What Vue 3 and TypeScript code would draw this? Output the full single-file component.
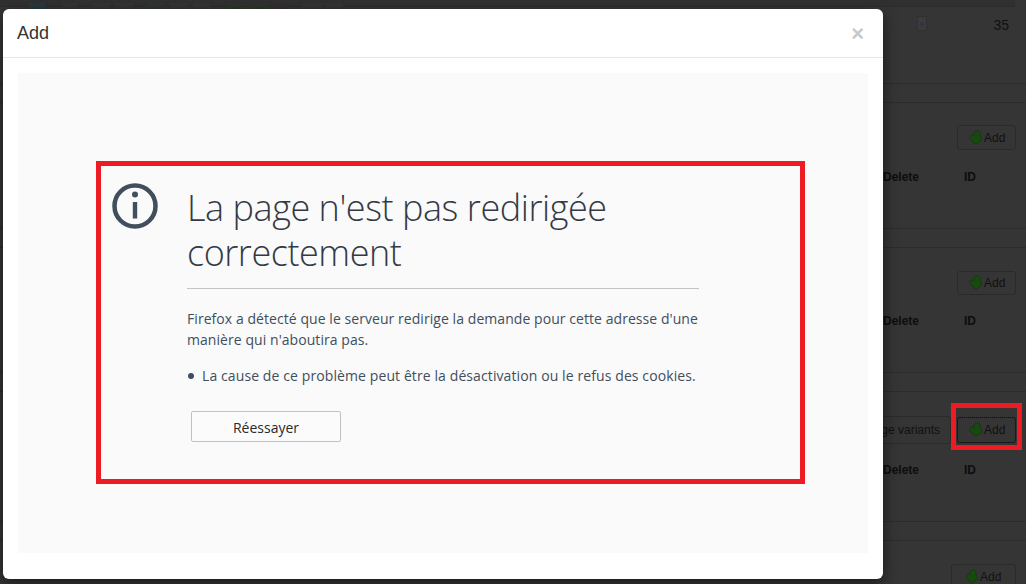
<script setup lang="ts">
interface Row {
  id: string
  head: boolean
  variants?: boolean
  focus?: boolean
}
interface Thumb {
  gap: number
  width: number
  tint: string
}
const thumbs: Thumb[] = [
  { gap: 29, width: 16, tint: '#29383f' },
  { gap: 18, width: 14, tint: '#323435' },
  { gap: 15, width: 18, tint: '#323435' },
  { gap: 5, width: 18, tint: '#323435' },
  { gap: 14, width: 16, tint: '#303530' },
  { gap: 7, width: 18, tint: '#323435' },
  { gap: 5, width: 17, tint: '#323435' },
  { gap: 18, width: 14, tint: '#2d362a' },
  { gap: 8, width: 17, tint: '#2d362a' },
  { gap: 8, width: 13, tint: '#352f2f' },
  { gap: 14, width: 21, tint: '#323435' },
  { gap: 2, width: 18, tint: '#323435' },
]
const rows: Row[] = [
  { id: 'b1', head: true },
  { id: 'b2', head: true },
  { id: 'b3', head: true, variants: true, focus: true },
  { id: 'b4', head: false },
]
</script>

<template>
  <div class="page">
    <div class="backdrop">
      <div class="strip">
        <span
          v-for="(t, i) in thumbs"
          :key="i"
          class="thumb"
          :style="{ marginLeft: t.gap + 'px', width: t.width + 'px', background: t.tint }"
        ></span>
      </div>
      <div class="first-row">
        <span class="file"><i></i></span>
        <span class="num">35</span>
      </div>
      <section v-for="r in rows" :key="r.id" class="block" :class="r.id">
        <div class="actions">
          <span v-if="r.variants" class="btn variants">Manage variants</span>
          <span class="btn add" :class="{ focus: r.focus, wide: !r.head }">
            <svg class="clover" viewBox="0 0 16 16" aria-hidden="true">
              <path d="M6.200 5.600a3.200 3.200 0 1 1 5.400.4 3.100 3.100 0 0 1 .6 5.600 3.100 3.100 0 0 1-1.300.1 3.200 3.200 0 0 1-6.200-.9 3.100 3.100 0 0 1-.6-.1A3.100 3.100 0 0 1 3.400 5.300a3.100 3.100 0 0 1 2.800.3z" />
            </svg>Add
          </span>
        </div>
        <div v-if="r.head" class="heads"><b>Delete</b><b>ID</b></div>
      </section>
      <span class="mark"></span>
    </div>

    <div class="modal">
      <header class="modal-head">
        <h4>Add</h4>
        <span class="close">×</span>
      </header>
      <div class="modal-body">
        <div class="frame">
          <div class="error">
            <svg class="info" viewBox="0 0 46 46" aria-hidden="true">
              <circle cx="23" cy="23" r="20.500" fill="none" stroke="#414e5d" stroke-width="4.500" />
              <circle cx="23" cy="11.500" r="3" fill="#414e5d" />
              <rect x="20.800" y="19" width="4.400" height="16.500" fill="#414e5d" />
            </svg>
            <div class="content">
              <h1>La page n'est pas redirigée correctement</h1>
              <p>Firefox a détecté que le serveur redirige la demande pour cette adresse d'une manière qui n'aboutira pas.</p>
              <ul><li>La cause de ce problème peut être la désactivation ou le refus des cookies.</li></ul>
              <button type="button">Réessayer</button>
            </div>
          </div>
        </div>
      </div>
    </div>
  </div>
</template>

<style>
html, body { margin: 0; overflow: hidden; }
</style>

<style scoped>
.page {
  position: relative;
  width: 1026px;
  height: 584px;
  overflow: hidden;
  background: #353535;
  font-family: "Liberation Sans", Arial, sans-serif;
}
.backdrop { width: 1026px; height: 584px; color: #111; }
.strip {
  display: flex;
  box-sizing: border-box;
  height: 7px;
  width: 1015px;
  padding-top: 3px;
  background: #303030;
  border-bottom: 1px solid #2c2c2c;
}
.thumb { height: 6px; flex: none; }
.first-row {
  display: flex;
  justify-content: space-between;
  box-sizing: border-box;
  height: 76px;
  margin-left: 917px;
  padding: 9px 17px 0 0;
  font-size: 14px;
  line-height: 18px;
}
.file {
  box-sizing: border-box;
  width: 10px;
  height: 15px;
  background: #3b3b3b;
  border: 1px solid #303030;
  display: flex;
  align-items: center;
  justify-content: center;
}
.file i { width: 4px; height: 4px; border-radius: 50%; background: #2b3550; }
.block { border-top: 1px solid #2c2c2c; box-sizing: border-box; }
.block::before {
  content: "";
  display: block;
  height: 18px;
  border-bottom: 1px solid #2c2c2c;
}
.b1 { height: 145px; }
.b2 { height: 144px; }
.b3 { height: 149px; }
.b4 { height: 63px; }
.actions { display: flex; justify-content: flex-end; gap: 6px; padding: 22px 10px 0 0; }
.b2 .actions { padding-top: 23px; }
.b3 .actions { padding-top: 24px; align-items: center; }
.b4 .actions { padding-top: 23px; }
.btn {
  display: inline-flex;
  align-items: center;
  box-sizing: border-box;
  height: 25px;
  font-size: 12px;
  color: #111;
  border: 1px solid #2a2a2a;
  border-radius: 3px;
}
.b2 .btn { height: 24px; }
.add { width: 59px; padding-left: 10px; }
.add.wide { width: 65px; padding-left: 12px; }
.add.focus { height: 26px; outline: 1px dotted #0d0d0d; outline-offset: -1px; }
.variants { height: 28px; padding: 0 10px; white-space: nowrap; }
.clover { width: 16px; height: 16px; fill: #174a0e; stroke: #10320a; stroke-width: 0.6; flex: none; }
.heads { display: flex; padding-left: 883px; font-size: 12px; color: #0d0d0d; margin-top: 20px; }
.b2 .heads { margin-top: 19px; }
.b3 .heads { margin-top: 19px; }
.heads b:first-child { width: 81px; }
.mark {
  position: absolute;
  left: 951px;
  top: 403px;
  width: 71px;
  height: 47px;
  box-sizing: border-box;
  border: 5px solid #ed1c24;
}
.modal {
  position: absolute;
  left: 3px;
  top: 9px;
  width: 880px;
  height: 570px;
  background: #fff;
  border-radius: 6px;
  box-shadow: 0 5px 15px rgba(0, 0, 0, 0.5);
  display: flex;
  flex-direction: column;
}
.modal-head {
  display: flex;
  justify-content: space-between;
  align-items: center;
  box-sizing: border-box;
  height: 49px;
  padding: 0 19px 0 14px;
  border-bottom: 1px solid #e5e5e5;
}
h4 { margin: 0; font-size: 18px; font-weight: 400; color: #333; line-height: 1; }
.close { font-size: 22px; font-weight: 700; color: #c9c9c9; line-height: 1; padding-top: 1px; }
.modal-body { padding: 15px; flex: 1; display: flex; }
.frame {
  box-sizing: border-box;
  width: 850px;
  height: 480px;
  padding: 88px 0 0 78px;
  background: #fafafa;
}
.error {
  box-sizing: border-box;
  width: 709px;
  height: 323px;
  border: 5px solid #ed1c24;
  display: flex;
  padding: 18px 0 0 11px;
  color: #414e5d;
  font-family: "Open Sans", "Noto Sans", sans-serif;
}
.info { width: 46px; height: 46px; flex: none; margin: -1px 29px 0 0; }
.content { width: 512px; }
h1 {
  margin: 0;
  padding: 1px 0 13px;
  font-size: 36px;
  line-height: 45px;
  font-weight: 300;
  color: #333a44;
  border-bottom: 1px solid #c3c3c3;
  letter-spacing: -0.45px;
}
p { margin: 19px 0 0; font-size: 14px; line-height: 21px; letter-spacing: 0.06px; }
ul { margin: 15px 0 0; padding: 0; list-style: none; font-size: 14px; line-height: 21px; letter-spacing: 0.1px; }
li { display: flex; white-space: nowrap; }
li::before {
  content: "";
  flex: none;
  width: 6px;
  height: 6px;
  margin: 8px 8px 0 1px;
  border-radius: 50%;
  background: #414e5d;
}
button {
  display: block;
  margin: 25px 0 0 4px;
  width: 150px;
  height: 31px;
  padding: 1px 0 0;
  background: #fbfbfb;
  border: 1px solid #c1c1c1;
  border-radius: 2px;
  color: #2a2a2e;
  font: 14px "Open Sans", "Noto Sans", sans-serif;
}
</style>
